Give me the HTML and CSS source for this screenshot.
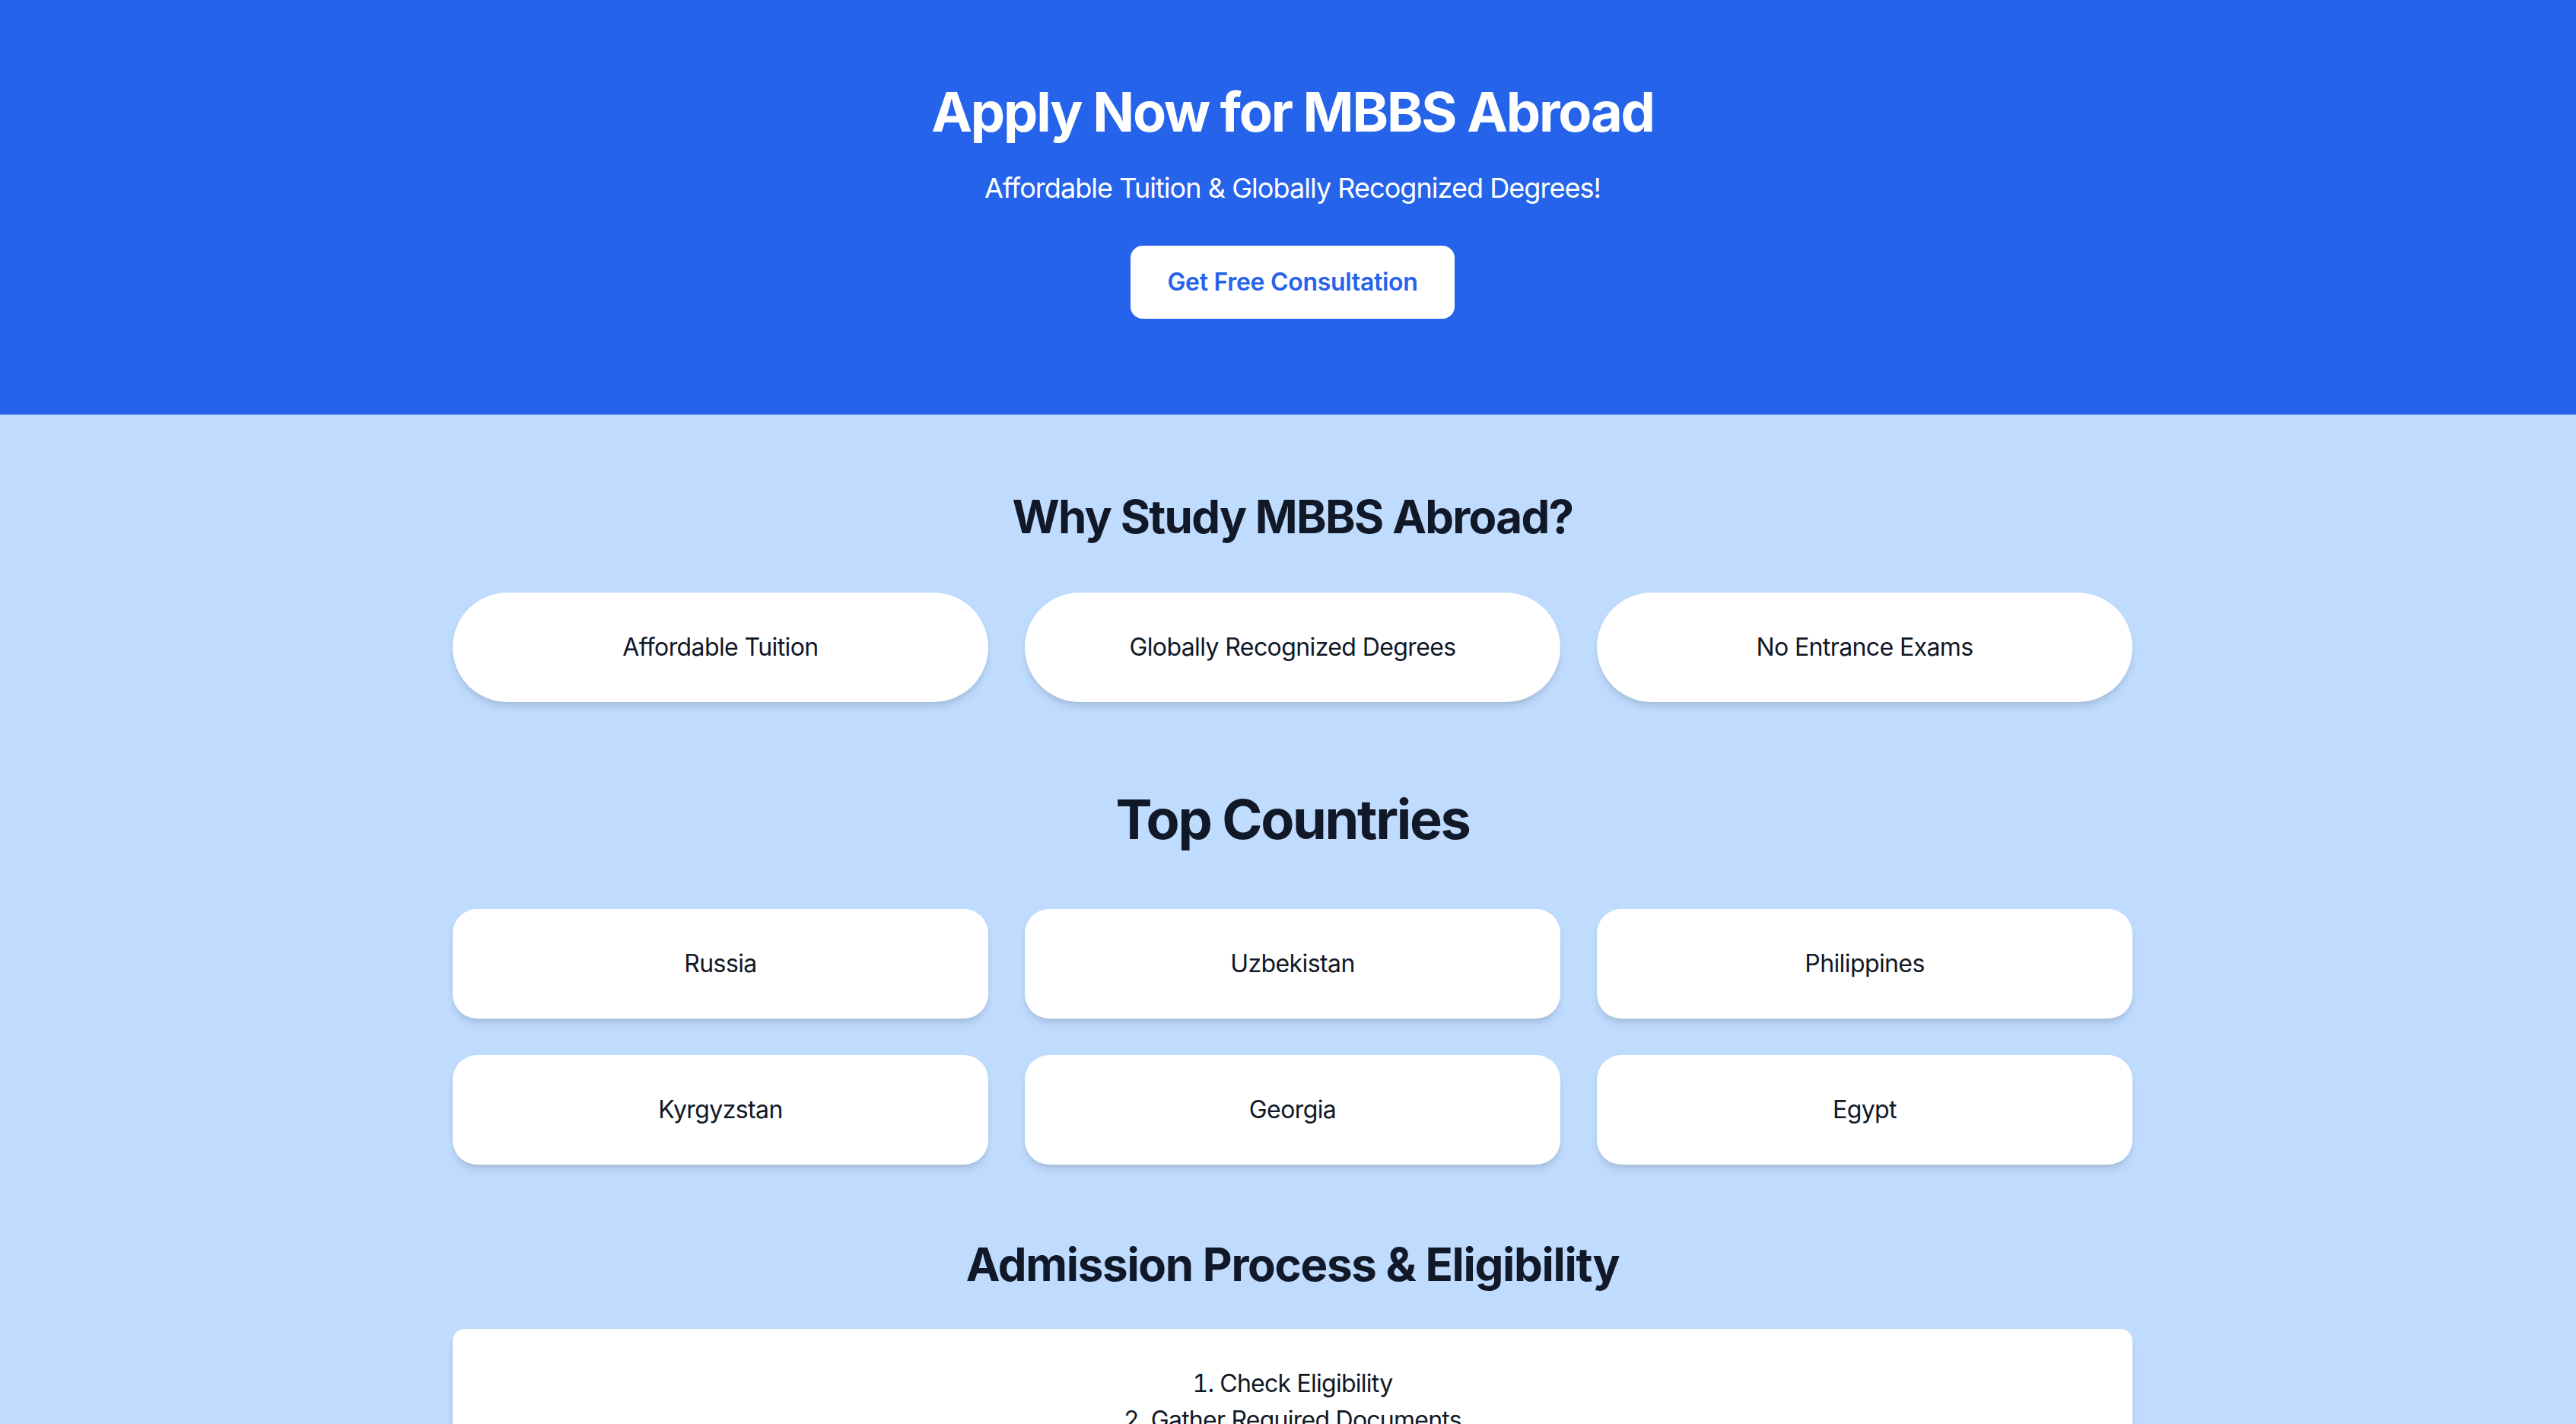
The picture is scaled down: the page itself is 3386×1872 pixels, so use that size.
FILE: index.html
```html
<!DOCTYPE html>
<html lang="en">
<head>
<meta charset="utf-8">
<title>Apply Now for MBBS Abroad</title>
<link rel="stylesheet" href="styles.css">
</head>
<body>
<header class="hero">
  <h1 class="hero-title">Apply Now for MBBS Abroad</h1>
  <p class="hero-sub">Affordable Tuition &amp; Globally Recognized Degrees!</p>
  <a class="hero-btn" href="#">Get Free Consultation</a>
</header>
<main class="main">
  <section class="section section-why">
    <h2 class="heading heading-md heading-why">Why Study MBBS Abroad?</h2>
    <div class="grid">
      <div class="card card-pill">Affordable Tuition</div>
      <div class="card card-pill">Globally Recognized Degrees</div>
      <div class="card card-pill">No Entrance Exams</div>
    </div>
  </section>
  <section class="section section-countries">
    <h2 class="heading heading-lg">Top Countries</h2>
    <div class="grid">
      <div class="card card-box">Russia</div>
      <div class="card card-box">Uzbekistan</div>
      <div class="card card-box">Philippines</div>
      <div class="card card-box">Kyrgyzstan</div>
      <div class="card card-box">Georgia</div>
      <div class="card card-box">Egypt</div>
    </div>
  </section>
  <section class="section section-admission">
    <h2 class="heading heading-md heading-tight">Admission Process &amp; Eligibility</h2>
    <div class="panel">
      <ol class="steps">
        <li>Check Eligibility</li>
        <li>Gather Required Documents</li>
        <li>Apply to Universities</li>
        <li>Receive Admission Letter</li>
        <li>Apply for Visa</li>
      </ol>
    </div>
  </section>
</main>
</body>
</html>
```
FILE: styles.css
```css
* { box-sizing: border-box; }
html, body { margin: 0; padding: 0; }
body {
  font-family: Inter, "Noto Sans", "Liberation Sans", sans-serif;
  color: #111827;
  background: #bfdbfe;
}
.hero {
  background: #2563eb;
  color: #ffffff;
  text-align: center;
  padding: 107px 0 126px 12px;
}
.hero-title {
  margin: 0 0 32px;
  font-size: 72px;
  line-height: 80px;
  font-weight: 700;
  letter-spacing: -2.2px;
}
.hero-sub {
  margin: 0 0 48px;
  font-size: 36px;
  line-height: 56px;
  letter-spacing: -0.95px;
}
.hero-btn {
  display: inline-block;
  background: #ffffff;
  color: #2563eb;
  font-size: 32px;
  line-height: 48px;
  font-weight: 600;
  letter-spacing: -0.3px;
  padding: 24px 48px;
  border-radius: 16px;
  text-decoration: none;
}
.main {
  padding: 0 0 96px 12px;
}
.section {
  max-width: 2304px;
  margin: 0 auto;
  padding: 0 48px;
  text-align: center;
}
.section-why { padding-top: 98px; }
.section-countries { padding-top: 114px; }
.section-admission { padding-top: 95px; }
.heading {
  margin: 0 0 64px;
  font-weight: 700;
}
.heading-md { font-size: 60px; line-height: 72px; letter-spacing: -1.3px; }
.heading-why { letter-spacing: -1.7px; }
.heading-lg { font-size: 72px; line-height: 80px; margin-bottom: 78px; letter-spacing: -2.3px; }
.heading-tight { margin-bottom: 49px; }
.grid {
  display: grid;
  grid-template-columns: repeat(3, 1fr);
  gap: 48px;
}
.card {
  background: #ffffff;
  padding: 48px;
  font-size: 32px;
  line-height: 48px;
  letter-spacing: -0.6px;
  box-shadow: 0 8px 12px -2px rgba(0,0,0,0.1), 0 4px 8px -4px rgba(0,0,0,0.1);
}
.card-pill { border-radius: 9999px; }
.card-box { border-radius: 32px; }
.panel {
  background: #ffffff;
  border-radius: 16px;
  padding: 48px;
  box-shadow: 0 8px 12px -2px rgba(0,0,0,0.1), 0 4px 8px -4px rgba(0,0,0,0.1);
}
.steps {
  margin: 0;
  padding: 0;
  list-style: decimal inside;
  font-size: 32px;
  line-height: 48px;
  letter-spacing: -0.75px;
}
```
